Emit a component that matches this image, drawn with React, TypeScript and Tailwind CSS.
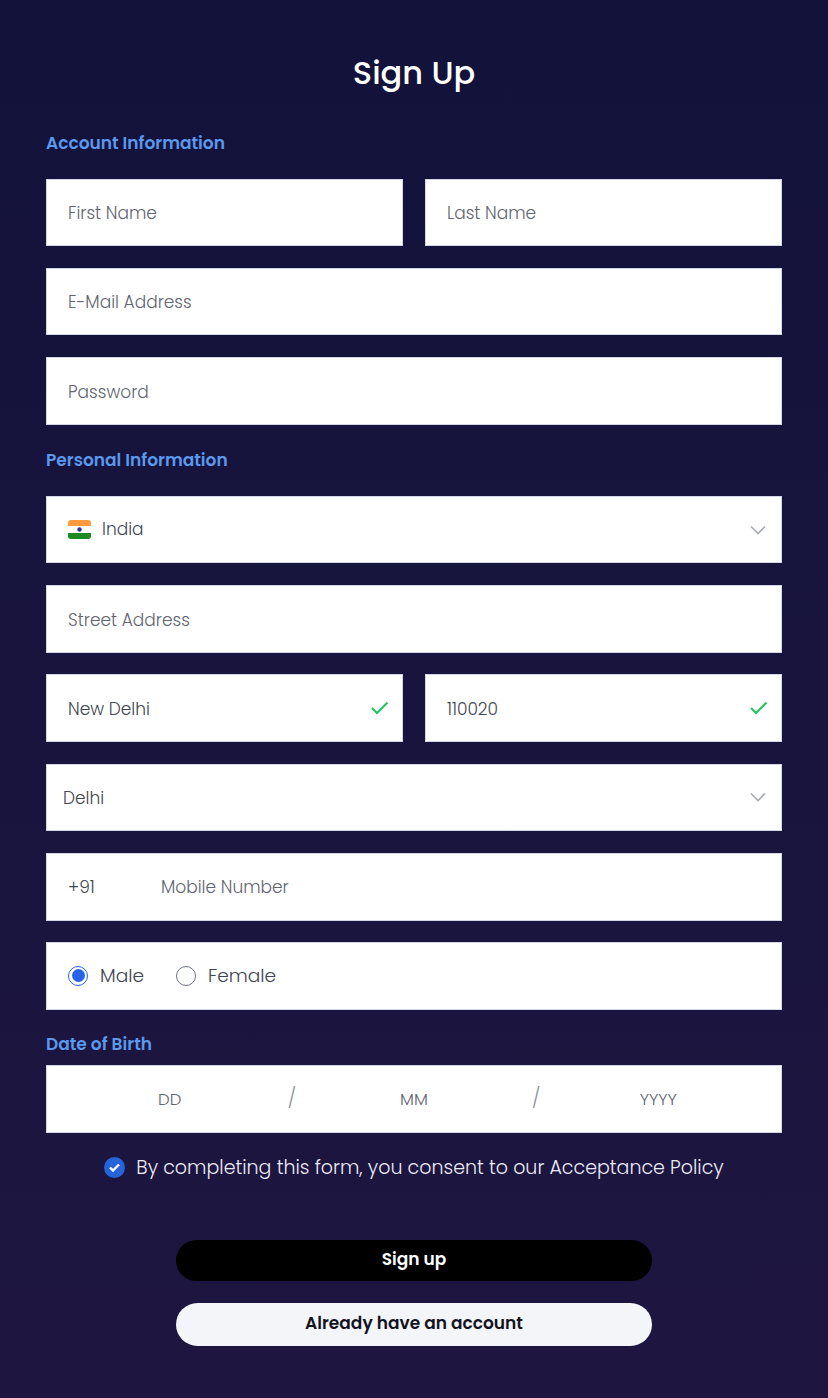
const font = "font-['Poppins','Inter','Noto_Sans',sans-serif]";
const box = "flex h-[67.7px] items-center border border-[#d3d6e6] bg-white";

function CheckMark() {
  return (
    <svg width="18" height="14" viewBox="0 0 18 14" fill="none" stroke="#22c55e" strokeWidth="2">
      <path d="M1 7l5 5L16.5 1.5" />
    </svg>
  );
}

function Chevron() {
  return (
    <svg width="16" height="10" viewBox="0 0 16 10" fill="none" stroke="#a8acb3" strokeWidth="1.7">
      <path d="M1 1.5l7 7 7-7" />
    </svg>
  );
}

function Field({ text, value, checked }: { text: string; value?: boolean; checked?: boolean }) {
  return (
    <div className={`${box} justify-between pl-[21px] pr-[13px]`}>
      <span className={`pt-[3px] text-[17px] font-light ${value ? "text-[#3f4550]" : "text-[#5f6570]"}`}>{text}</span>
      {checked && <CheckMark />}
    </div>
  );
}

function Heading({ children, className = "" }: { children: string; className?: string }) {
  return <h2 className={`text-[17px] leading-[26px] font-semibold text-[#5c98ec] ${className}`}>{children}</h2>;
}

export default function App() {
  return (
    <div className={`flex h-[1398px] flex-col bg-gradient-to-b from-[#12123b] to-[#1e1640] px-[46px] pt-[52px] ${font}`}>
      <h1 className="text-center text-[32px] leading-[42px] font-medium text-white">Sign Up</h1>
      <Heading className="mt-[36px]">Account Information</Heading>
      <div className="mt-[22.5px] flex flex-col gap-[21.6px]">
        <div className="grid grid-cols-2 gap-[22px]">
          <Field text="First Name" />
          <Field text="Last Name" />
        </div>
        <Field text="E-Mail Address" />
        <Field text="Password" />
      </div>
      <Heading className="mt-[22px]">Personal Information</Heading>
      <div className="mt-[23px] flex flex-col gap-[21.6px]">
        <div className={`${box} justify-between pl-[21px] pr-[15px]`}>
          <div className="flex items-center gap-[11px]">
            <svg width="23" height="19" viewBox="0 0 23 19">
              <path d="M0 3a3 3 0 0 1 3-3h17a3 3 0 0 1 3 3v3H0z" fill="#fb9a3e" />
              <rect y="6" width="23" height="7" fill="#ffffff" />
              <path d="M0 13h23v3a3 3 0 0 1-3 3H3a3 3 0 0 1-3-3z" fill="#1c8a22" />
              <circle cx="11.5" cy="9.5" r="2.2" fill="#2b3a8c" />
            </svg>
            <span className="pt-px text-[17px] font-light text-[#3f4550]">India</span>
          </div>
          <Chevron />
        </div>
        <Field text="Street Address" />
        <div className="grid grid-cols-2 gap-[22px]">
          <Field text="New Delhi" value checked />
          <Field text="110020" value checked />
        </div>
        <div className={`${box} justify-between pl-[16px] pr-[15px]`}>
          <span className="pt-[3px] text-[17px] font-light text-[#3f4550]">Delhi</span>
          <Chevron />
        </div>
        <div className={`${box} pl-[21px]`}>
          <span className="w-[93px] pt-[3px] text-[17px] font-light text-[#3f4550]">+91</span>
          <span className="pt-[3px] text-[17px] font-light text-[#5f6570]">Mobile Number</span>
        </div>
        <div className={`${box} gap-8 pl-[21px]`}>
          <label className="flex items-center gap-3">
            <span className="flex h-5 w-5 items-center justify-center rounded-full border-[1.5px] border-[#2563eb]">
              <span className="h-[13px] w-[13px] rounded-full bg-[#2563eb]" />
            </span>
            <span className="text-[18.6px] font-light text-[#3f4550]">Male</span>
          </label>
          <label className="flex items-center gap-3">
            <span className="h-5 w-5 rounded-full border-[1.5px] border-[#6b7280]" />
            <span className="text-[18.6px] font-light text-[#3f4550]">Female</span>
          </label>
        </div>
      </div>
      <Heading className="mt-[21px]">Date of Birth</Heading>
      <div className={`${box} mt-[8.5px] grid grid-cols-[1fr_1px_1fr_1px_1fr] px-px text-center text-[16.5px] font-light text-[#5f6570]`}>
        <span className="pt-[3px]">DD</span>
        <span className="flex justify-center text-[19px] text-[#8b9098]">/</span>
        <span className="pt-[3px]">MM</span>
        <span className="flex justify-center text-[19px] text-[#8b9098]">/</span>
        <span className="pt-[3px]">YYYY</span>
      </div>
      <div className="mt-[20.5px] flex items-center justify-center gap-[11px]">
        <span className="flex h-[21px] w-[21px] items-center justify-center rounded-full bg-[#2563d9]">
          <svg width="11" height="9" viewBox="0 0 11 9" fill="none" stroke="#ffffff" strokeWidth="2.4">
            <path d="M1 4.5l3 3 6-6" />
          </svg>
        </span>
        <span className="text-[19px] leading-[28px] font-light text-[#ecebf7]">By completing this form, you consent to our Acceptance Policy</span>
      </div>
      <div className="mt-[58px] flex flex-col items-center gap-[22px]">
        <button className="h-[41px] w-[476px] rounded-full bg-black text-[17px] font-semibold text-white">Sign up</button>
        <button className="h-[43px] w-[476px] rounded-full bg-[#f3f5f8] text-[17px] font-semibold text-[#14141f]">Already have an account</button>
      </div>
    </div>
  );
}
